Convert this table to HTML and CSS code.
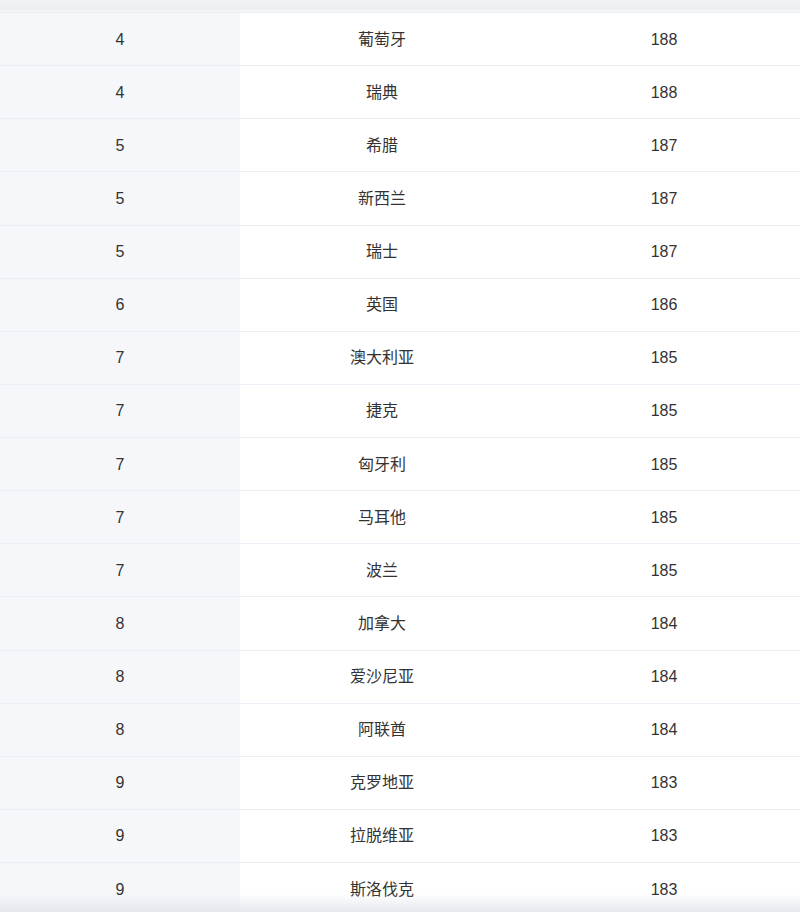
FILE: index.html
```html
<!DOCTYPE html>
<html lang="zh">
<head>
<meta charset="utf-8">
<link rel="stylesheet" href="styles.css">
</head>
<body>
<div class="wrap">
  <div class="top-strip"></div>
  <div class="rows">
    <div class="row"><div class="c c1">4</div><div class="c c2">葡萄牙</div><div class="c c3">188</div></div>
    <div class="row"><div class="c c1">4</div><div class="c c2">瑞典</div><div class="c c3">188</div></div>
    <div class="row"><div class="c c1">5</div><div class="c c2">希腊</div><div class="c c3">187</div></div>
    <div class="row"><div class="c c1">5</div><div class="c c2">新西兰</div><div class="c c3">187</div></div>
    <div class="row"><div class="c c1">5</div><div class="c c2">瑞士</div><div class="c c3">187</div></div>
    <div class="row"><div class="c c1">6</div><div class="c c2">英国</div><div class="c c3">186</div></div>
    <div class="row"><div class="c c1">7</div><div class="c c2">澳大利亚</div><div class="c c3">185</div></div>
    <div class="row"><div class="c c1">7</div><div class="c c2">捷克</div><div class="c c3">185</div></div>
    <div class="row"><div class="c c1">7</div><div class="c c2">匈牙利</div><div class="c c3">185</div></div>
    <div class="row"><div class="c c1">7</div><div class="c c2">马耳他</div><div class="c c3">185</div></div>
    <div class="row"><div class="c c1">7</div><div class="c c2">波兰</div><div class="c c3">185</div></div>
    <div class="row"><div class="c c1">8</div><div class="c c2">加拿大</div><div class="c c3">184</div></div>
    <div class="row"><div class="c c1">8</div><div class="c c2">爱沙尼亚</div><div class="c c3">184</div></div>
    <div class="row"><div class="c c1">8</div><div class="c c2">阿联酋</div><div class="c c3">184</div></div>
    <div class="row"><div class="c c1">9</div><div class="c c2">克罗地亚</div><div class="c c3">183</div></div>
    <div class="row"><div class="c c1">9</div><div class="c c2">拉脱维亚</div><div class="c c3">183</div></div>
    <div class="row"><div class="c c1">9</div><div class="c c2">斯洛伐克</div><div class="c c3">183</div></div>
  </div>
  <div class="bottom-shadow"></div>
</div>
</body>
</html>
```
FILE: styles.css
```css
html, body {
  margin: 0;
  padding: 0;
  background: #ffffff;
}
body {
  font-family: "Liberation Sans", "Noto Sans CJK SC", sans-serif;
  font-size: 16px;
  line-height: 16px;
  color: #333333;
}
.wrap {
  position: relative;
  width: 800px;
  height: 912px;
  overflow: hidden;
}
.top-strip {
  height: 13px;
  background: linear-gradient(to bottom, #f1f2f5 0%, #eceef1 70%, #f6f7f9 100%);
  border-bottom: 1px solid #ebeef5;
  box-sizing: border-box;
}
.row {
  display: grid;
  grid-template-columns: 240px 284px 280px;
  width: 804px;
  height: 53.125px;
  box-sizing: border-box;
  border-bottom: 1px solid #ebeef5;
}
.c {
  display: flex;
  align-items: center;
  justify-content: center;
  padding-top: 1px;
}
.c1 {
  background: #f5f7fa;
}
.bottom-shadow {
  position: absolute;
  left: 0;
  right: 0;
  bottom: 0;
  height: 18px;
  background: linear-gradient(to bottom, rgba(230, 232, 236, 0) 0%, rgba(226, 229, 234, 0.9) 100%);
  pointer-events: none;
}
```
